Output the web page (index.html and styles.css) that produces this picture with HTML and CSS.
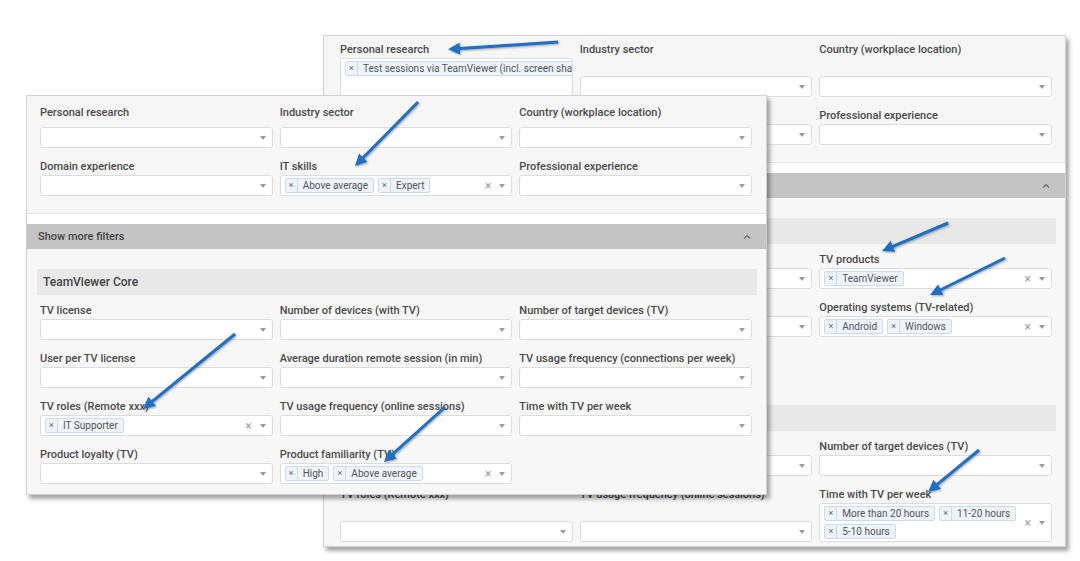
FILE: index.html
```html
<!DOCTYPE html>
<html>
<head>
    <title>Filter panels</title>
    <link rel="stylesheet" href="styles.css">
</head>
<body>
<div class="stage">

    <!-- back screenshot -->
    <div class="window window-back">
        <div class="filters-top grid">
            <div class="field">
                <label>Personal research</label>
                <div class="select select-tall">
                    <div class="tags">
                        <span class="tag"><span class="tag-x">×</span><span class="tag-text">Test sessions via TeamViewer (incl. screen sharing)</span></span>
                    </div>
                    <span class="clear">×</span><span class="caret"></span>
                </div>
            </div>
            <div class="field">
                <label>Industry sector</label>
                <div class="select"><div class="tags"></div><span class="caret"></span></div>
            </div>
            <div class="field">
                <label>Country (workplace location)</label>
                <div class="select"><div class="tags"></div><span class="caret"></span></div>
            </div>
            <div class="field">
                <label>Domain experience</label>
                <div class="select"><div class="tags"></div><span class="caret"></span></div>
            </div>
            <div class="field">
                <label>IT skills</label>
                <div class="select"><div class="tags"></div><span class="caret"></span></div>
            </div>
            <div class="field">
                <label>Professional experience</label>
                <div class="select"><div class="tags"></div><span class="caret"></span></div>
            </div>
        </div>

        <div class="more-bar">
            <span>Show more filters</span>
            <svg class="chevron" width="8" height="5" viewBox="0 0 8 5"><polyline points="1,4.5 4,1.5 7,4.5"/></svg>
        </div>

        <div class="filters-more">
            <div class="section">
                <div class="section-title">TeamViewer General</div>
                <div class="grid">
                    <div class="field">
                        <label>TV license</label>
                        <div class="select"><div class="tags"></div><span class="caret"></span></div>
                    </div>
                    <div class="field">
                        <label>TV version</label>
                        <div class="select"><div class="tags"></div><span class="caret"></span></div>
                    </div>
                    <div class="field">
                        <label>TV products</label>
                        <div class="select">
                            <div class="tags">
                                <span class="tag"><span class="tag-x">×</span><span class="tag-text">TeamViewer</span></span>
                            </div>
                            <span class="clear">×</span><span class="caret"></span>
                        </div>
                    </div>
                    <div class="field">
                        <label>User per TV license</label>
                        <div class="select"><div class="tags"></div><span class="caret"></span></div>
                    </div>
                    <div class="field">
                        <label>Number of devices (with TV)</label>
                        <div class="select"><div class="tags"></div><span class="caret"></span></div>
                    </div>
                    <div class="field">
                        <label>Operating systems (TV-related)</label>
                        <div class="select">
                            <div class="tags">
                                <span class="tag"><span class="tag-x">×</span><span class="tag-text">Android</span></span>
                                <span class="tag"><span class="tag-x">×</span><span class="tag-text">Windows</span></span>
                            </div>
                            <span class="clear">×</span><span class="caret"></span>
                        </div>
                    </div>
                    <div class="field">
                        <label>Product loyalty (TV)</label>
                        <div class="select"><div class="tags"></div><span class="caret"></span></div>
                    </div>
                </div>
            </div>

            <div class="section">
                <div class="section-title">TeamViewer Core</div>
                <div class="grid">
                    <div class="field">
                        <label>TV license</label>
                        <div class="select"><div class="tags"></div><span class="caret"></span></div>
                    </div>
                    <div class="field">
                        <label>Number of devices (with TV)</label>
                        <div class="select"><div class="tags"></div><span class="caret"></span></div>
                    </div>
                    <div class="field">
                        <label>Number of target devices (TV)</label>
                        <div class="select"><div class="tags"></div><span class="caret"></span></div>
                    </div>
                    <div class="field">
                        <label>TV roles (Remote xxx)</label>
                        <div class="select"><div class="tags"></div><span class="caret"></span></div>
                    </div>
                    <div class="field">
                        <label>TV usage frequency (online sessions)</label>
                        <div class="select"><div class="tags"></div><span class="caret"></span></div>
                    </div>
                    <div class="field">
                        <label>Time with TV per week</label>
                        <div class="select">
                            <div class="tags">
                                <span class="tag"><span class="tag-x">×</span><span class="tag-text">More than 20 hours</span></span>
                                <span class="tag"><span class="tag-x">×</span><span class="tag-text">11-20 hours</span></span>
                                <span class="tag"><span class="tag-x">×</span><span class="tag-text">5-10 hours</span></span>
                            </div>
                            <span class="clear">×</span><span class="caret"></span>
                        </div>
                    </div>
                </div>
            </div>
        </div>
    </div>

    <!-- front screenshot -->
    <div class="window window-front">
        <div class="filters-top grid">
            <div class="field field-spaced">
                <label>Personal research</label>
                <div class="select"><div class="tags"></div><span class="caret"></span></div>
            </div>
            <div class="field field-spaced">
                <label>Industry sector</label>
                <div class="select"><div class="tags"></div><span class="caret"></span></div>
            </div>
            <div class="field field-spaced">
                <label>Country (workplace location)</label>
                <div class="select"><div class="tags"></div><span class="caret"></span></div>
            </div>
            <div class="field">
                <label>Domain experience</label>
                <div class="select"><div class="tags"></div><span class="caret"></span></div>
            </div>
            <div class="field">
                <label>IT skills</label>
                <div class="select">
                    <div class="tags">
                        <span class="tag"><span class="tag-x">×</span><span class="tag-text">Above average</span></span>
                        <span class="tag"><span class="tag-x">×</span><span class="tag-text">Expert</span></span>
                    </div>
                    <span class="clear">×</span><span class="caret"></span>
                </div>
            </div>
            <div class="field">
                <label>Professional experience</label>
                <div class="select"><div class="tags"></div><span class="caret"></span></div>
            </div>
        </div>

        <div class="more-bar">
            <span>Show more filters</span>
            <svg class="chevron" width="8" height="5" viewBox="0 0 8 5"><polyline points="1,4.5 4,1.5 7,4.5"/></svg>
        </div>

        <div class="filters-more">
            <div class="section">
                <div class="section-title">TeamViewer Core</div>
                <div class="grid">
                    <div class="field">
                        <label>TV license</label>
                        <div class="select"><div class="tags"></div><span class="caret"></span></div>
                    </div>
                    <div class="field">
                        <label>Number of devices (with TV)</label>
                        <div class="select"><div class="tags"></div><span class="caret"></span></div>
                    </div>
                    <div class="field">
                        <label>Number of target devices (TV)</label>
                        <div class="select"><div class="tags"></div><span class="caret"></span></div>
                    </div>
                    <div class="field">
                        <label>User per TV license</label>
                        <div class="select"><div class="tags"></div><span class="caret"></span></div>
                    </div>
                    <div class="field">
                        <label>Average duration remote session (in min)</label>
                        <div class="select"><div class="tags"></div><span class="caret"></span></div>
                    </div>
                    <div class="field">
                        <label>TV usage frequency (connections per week)</label>
                        <div class="select"><div class="tags"></div><span class="caret"></span></div>
                    </div>
                    <div class="field">
                        <label>TV roles (Remote xxx)</label>
                        <div class="select">
                            <div class="tags">
                                <span class="tag"><span class="tag-x">×</span><span class="tag-text">IT Supporter</span></span>
                            </div>
                            <span class="clear">×</span><span class="caret"></span>
                        </div>
                    </div>
                    <div class="field">
                        <label>TV usage frequency (online sessions)</label>
                        <div class="select"><div class="tags"></div><span class="caret"></span></div>
                    </div>
                    <div class="field">
                        <label>Time with TV per week</label>
                        <div class="select"><div class="tags"></div><span class="caret"></span></div>
                    </div>
                    <div class="field">
                        <label>Product loyalty (TV)</label>
                        <div class="select"><div class="tags"></div><span class="caret"></span></div>
                    </div>
                    <div class="field">
                        <label>Product familiarity (TV)</label>
                        <div class="select">
                            <div class="tags">
                                <span class="tag"><span class="tag-x">×</span><span class="tag-text">High</span></span>
                                <span class="tag"><span class="tag-x">×</span><span class="tag-text">Above average</span></span>
                            </div>
                            <span class="clear">×</span><span class="caret"></span>
                        </div>
                    </div>
                </div>
            </div>
        </div>
    </div>

    <!-- annotation arrows -->
    <svg class="arrows" width="1080" height="561" viewBox="0 0 1080 561">
        <defs>
            <marker id="head" viewBox="0 0 10 10" refX="3.3" refY="5" markerWidth="4" markerHeight="4" orient="auto">
                <path d="M0,0 L10,5 L0,10 z" fill="#1e70c4"/>
            </marker>
        </defs>
        <line x1="558" y1="42" x2="456" y2="48.8"/>
        <line x1="418" y1="102" x2="360.6" y2="160.3"/>
        <line x1="235" y1="334" x2="149.2" y2="403.9"/>
        <line x1="445" y1="407" x2="389.9" y2="456.6"/>
        <line x1="948" y1="223" x2="889.4" y2="247.9"/>
        <line x1="1005" y1="258" x2="937.2" y2="291.5"/>
        <line x1="979" y1="450" x2="934.2" y2="486.9"/>
    </svg>
</div>
</body>
</html>
```
FILE: styles.css
```css
* {
    box-sizing: border-box;
}

body {
    margin: 0;
    background: #fff;
    font-family: Roboto, "Liberation Sans", sans-serif;
    color: #4a4a4a;
}

.stage {
    position: relative;
    width: 1080px;
    height: 561px;
    overflow: hidden;
    background: #fff;
}

/* the two screenshots lie on the canvas */
.window {
    position: absolute;
    display: flex;
    flex-direction: column;
    background: #fff;
    border: 1px solid #d2d2d2;
    box-shadow: 3px 4px 4px rgba(0, 0, 0, 0.35);
    overflow: hidden;
}

.window-back {
    left: 323px;
    top: 35px;
    width: 743px;
    height: 512px;
    --pad-t: 5px;
    --pad-l: 16px;
    --pad-r: 13px;
}

.window-front {
    left: 26px;
    top: 95px;
    width: 741px;
    height: 400px;
    --pad-t: 8px;
    --pad-l: 13px;
    --pad-r: 14px;
}

.grid {
    display: grid;
    grid-template-columns: repeat(3, 1fr);
    column-gap: 7px;
    row-gap: 10px;
}

.filters-top {
    flex-shrink: 0;
    padding: var(--pad-t) var(--pad-r) 17px var(--pad-l);
    background: #f6f6f6;
    border-bottom: 1px solid #e4e4e4;
}

.field {
    display: flex;
    flex-direction: column;
    min-width: 0;
}

.field label {
    font-size: 11px;
    font-weight: 500;
    line-height: 14px;
    padding-top: 2px;
    margin-bottom: 1px;
    white-space: nowrap;
    color: #4a4a4a;
}

.field-spaced label {
    margin-bottom: 7px;
}

.select {
    margin-top: auto;
    display: flex;
    align-items: center;
    min-height: 21px;
    padding: 2px 6px 2px 4px;
    background: #fff;
    border: 1px solid #dcdcdc;
    border-radius: 3px;
    overflow: hidden;
}

.select-tall {
    min-height: 39px;
    align-items: flex-start;
}

.tags {
    flex: 1;
    display: flex;
    flex-wrap: wrap;
    gap: 3px 4px;
}

.tag {
    display: flex;
    font-size: 10px;
    line-height: 13px;
    color: #555;
    background: #edf4fd;
    border: 1px solid #c8dbf3;
    border-radius: 2px;
    white-space: nowrap;
}

.tag-x {
    width: 12px;
    text-align: center;
    font-size: 9px;
    color: #666;
    border-right: 1px solid #c8dbf3;
}

.tag-text {
    padding: 0 5px;
}

.clear {
    margin: 0 8px 0 6px;
    font-size: 12px;
    line-height: 12px;
    color: #a0a0a0;
}

.caret {
    flex-shrink: 0;
    width: 0;
    height: 0;
    border-left: 3.5px solid transparent;
    border-right: 3.5px solid transparent;
    border-top: 4px solid #9a9a9a;
}

.more-bar {
    flex-shrink: 0;
    display: flex;
    justify-content: space-between;
    align-items: center;
    height: 25px;
    margin-top: 10px;
    padding: 0 15px 0 11px;
    background: #c4c4c4;
    font-size: 11px;
    font-weight: 500;
    color: #444;
}

.chevron polyline {
    fill: none;
    stroke: #666;
    stroke-width: 1.2;
}

.filters-more {
    flex: 1;
    background: #f7f7f7;
}

.section {
    margin: 20px 9px 0 10px;
}

.section-title {
    height: 26px;
    line-height: 26px;
    padding: 0 6px;
    background: #e8e8e8;
    font-size: 12px;
    font-weight: 500;
    color: #444;
}

.section .grid {
    padding: 7px calc(var(--pad-r) - 9px) 0 calc(var(--pad-l) - 10px);
}

/* annotation layer */
.arrows {
    position: absolute;
    left: 0;
    top: 0;
    pointer-events: none;
    filter: drop-shadow(1px 1.5px 1px rgba(0, 0, 0, 0.35));
}

.arrows line {
    stroke: #1e70c4;
    stroke-width: 3;
    marker-end: url(#head);
}
```
